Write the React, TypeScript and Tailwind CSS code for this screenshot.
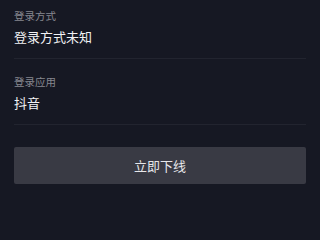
const rows = [
  { label: '登录方式', value: '登录方式未知', first: true },
  { label: '登录应用', value: '抖音', first: false },
];

export default function App() {
  return (
    <div
      className="min-h-screen w-[320px] bg-[#161823] px-[14px]"
      style={{ fontFamily: '"Noto Sans CJK SC", "Noto Sans", sans-serif' }}
    >
      {rows.map((row) => (
        <div
          key={row.label}
          className={`${row.first ? 'pt-[7px]' : 'pt-[14px]'} pb-[11px] border-b border-[#22242f]`}
        >
          <div className="text-[10.5px] leading-[17px] text-[#86878f]">{row.label}</div>
          <div className="mt-[3px] text-[13px] leading-[20px] text-[#f2f2f4]">{row.value}</div>
        </div>
      ))}

      <button className="mt-[22px] flex h-[37px] w-full items-center justify-center rounded-[2px] bg-[#393a44] text-[13px] text-[#e6e6e9]">
        立即下线
      </button>
    </div>
  );
}
